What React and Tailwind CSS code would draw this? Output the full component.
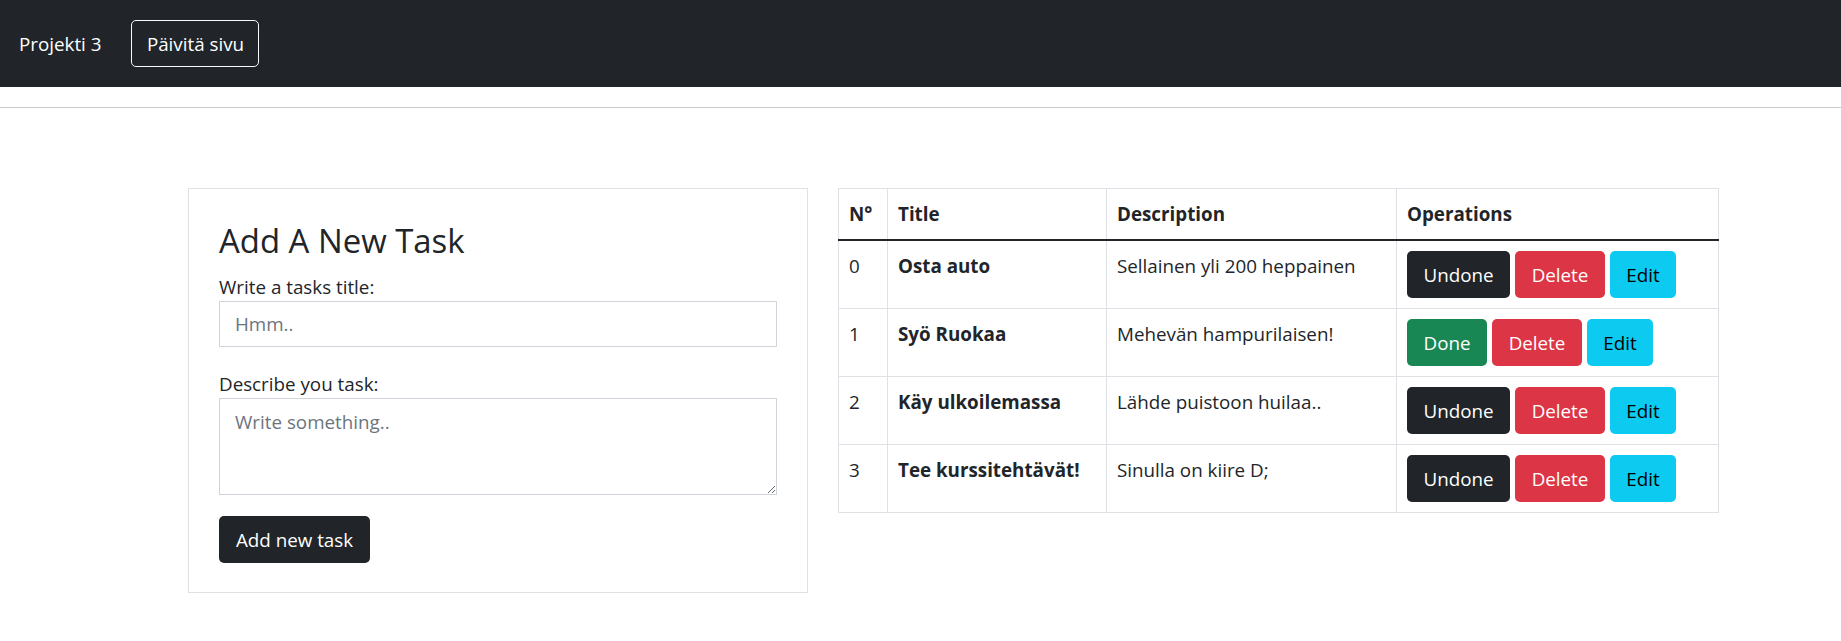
import React from "react";

const rows = [
  { n: 0, title: "Osta auto", desc: "Sellainen yli 200 heppainen", done: false },
  { n: 1, title: "Syö Ruokaa", desc: "Mehevän hampurilaisen!", done: true },
  { n: 2, title: "Käy ulkoilemassa", desc: "Lähde puistoon huilaa..", done: false },
  { n: 3, title: "Tee kurssitehtävät!", desc: "Sinulla on kiire D;", done: false },
];

export default function App() {
  return (
    <div className="min-h-[641px] bg-white font-['Open_Sans',sans-serif] text-[#212529] text-[18.8px] leading-[28px]">
      <nav className="h-[87px] bg-[#212529] flex items-center pl-[19px]">
        <span className="text-white text-[18.8px] leading-[28px]">Projekti 3</span>
        <button className="ml-[30px] w-[128px] h-[47px] border border-[#f8f9fa] rounded-[5px] text-white text-[18.8px] leading-[28px]">
          Päivitä sivu
        </button>
      </nav>
      <div className="mt-[20px] h-px bg-[#c8c9ca]" />
      <main className="pt-[80px] pl-[188px] flex items-start gap-[30px]">
        <div className="w-[620px] border border-[#dee2e6] pt-[32px] px-[30px] pb-[29px] flex flex-col">
          <h3 className="text-[32.9px] leading-[40px] font-normal mb-[12px]">Add A New Task</h3>
          <label className="leading-[28px]">Write a tasks title:</label>
          <input
            className="h-[46px] w-full border border-[#ced4da] px-[15px] text-[18.8px] outline-none placeholder:text-[#6c757d]"
            placeholder="Hmm.."
          />
          <label className="mt-[23px] leading-[28px]">Describe you task:</label>
          <textarea
            className="h-[97px] w-full border border-[#ced4da] pt-[9px] px-[15px] text-[18.8px] leading-[28px] outline-none placeholder:text-[#6c757d]"
            placeholder="Write something.."
          />
          <div className="mt-[21px]">
            <button className="w-[151px] h-[47px] bg-[#212529] text-white rounded-[5px] text-[18.8px] leading-[28px]">
              Add new task
            </button>
          </div>
        </div>
        <table className="w-[880px] table-fixed border-collapse">
          <colgroup>
            <col className="w-[49px]" />
            <col className="w-[219px]" />
            <col className="w-[290px]" />
            <col className="w-[322px]" />
          </colgroup>
          <thead>
            <tr>
              {["N°", "Title", "Description", "Operations"].map((h) => (
                <th
                  key={h}
                  className="border border-[#dee2e6] border-b-2 border-b-[#212529] px-[10px] py-[11px] text-left font-bold align-top leading-[28px]"
                >
                  {h}
                </th>
              ))}
            </tr>
          </thead>
          <tbody>
            {rows.map((r) => (
              <tr key={r.n}>
                <td className="border border-[#dee2e6] px-[10px] pt-[11px] align-top">{r.n}</td>
                <td className="border border-[#dee2e6] px-[10px] pt-[11px] align-top font-bold">{r.title}</td>
                <td className="border border-[#dee2e6] px-[10px] pt-[11px] align-top">{r.desc}</td>
                <td className="border border-[#dee2e6] px-[10px] py-[10px] align-top">
                  <div className="flex gap-[5px]">
                    {r.done ? (
                      <button className="w-[80px] h-[47px] rounded-[5px] bg-[#198754] text-white leading-[28px]">Done</button>
                    ) : (
                      <button className="w-[103px] h-[47px] rounded-[5px] bg-[#212529] text-white leading-[28px]">Undone</button>
                    )}
                    <button className="w-[90px] h-[47px] rounded-[5px] bg-[#dc3545] text-white leading-[28px]">Delete</button>
                    <button className="w-[66px] h-[47px] rounded-[5px] bg-[#0dcaf0] text-black leading-[28px]">Edit</button>
                  </div>
                </td>
              </tr>
            ))}
          </tbody>
        </table>
      </main>
    </div>
  );
}
